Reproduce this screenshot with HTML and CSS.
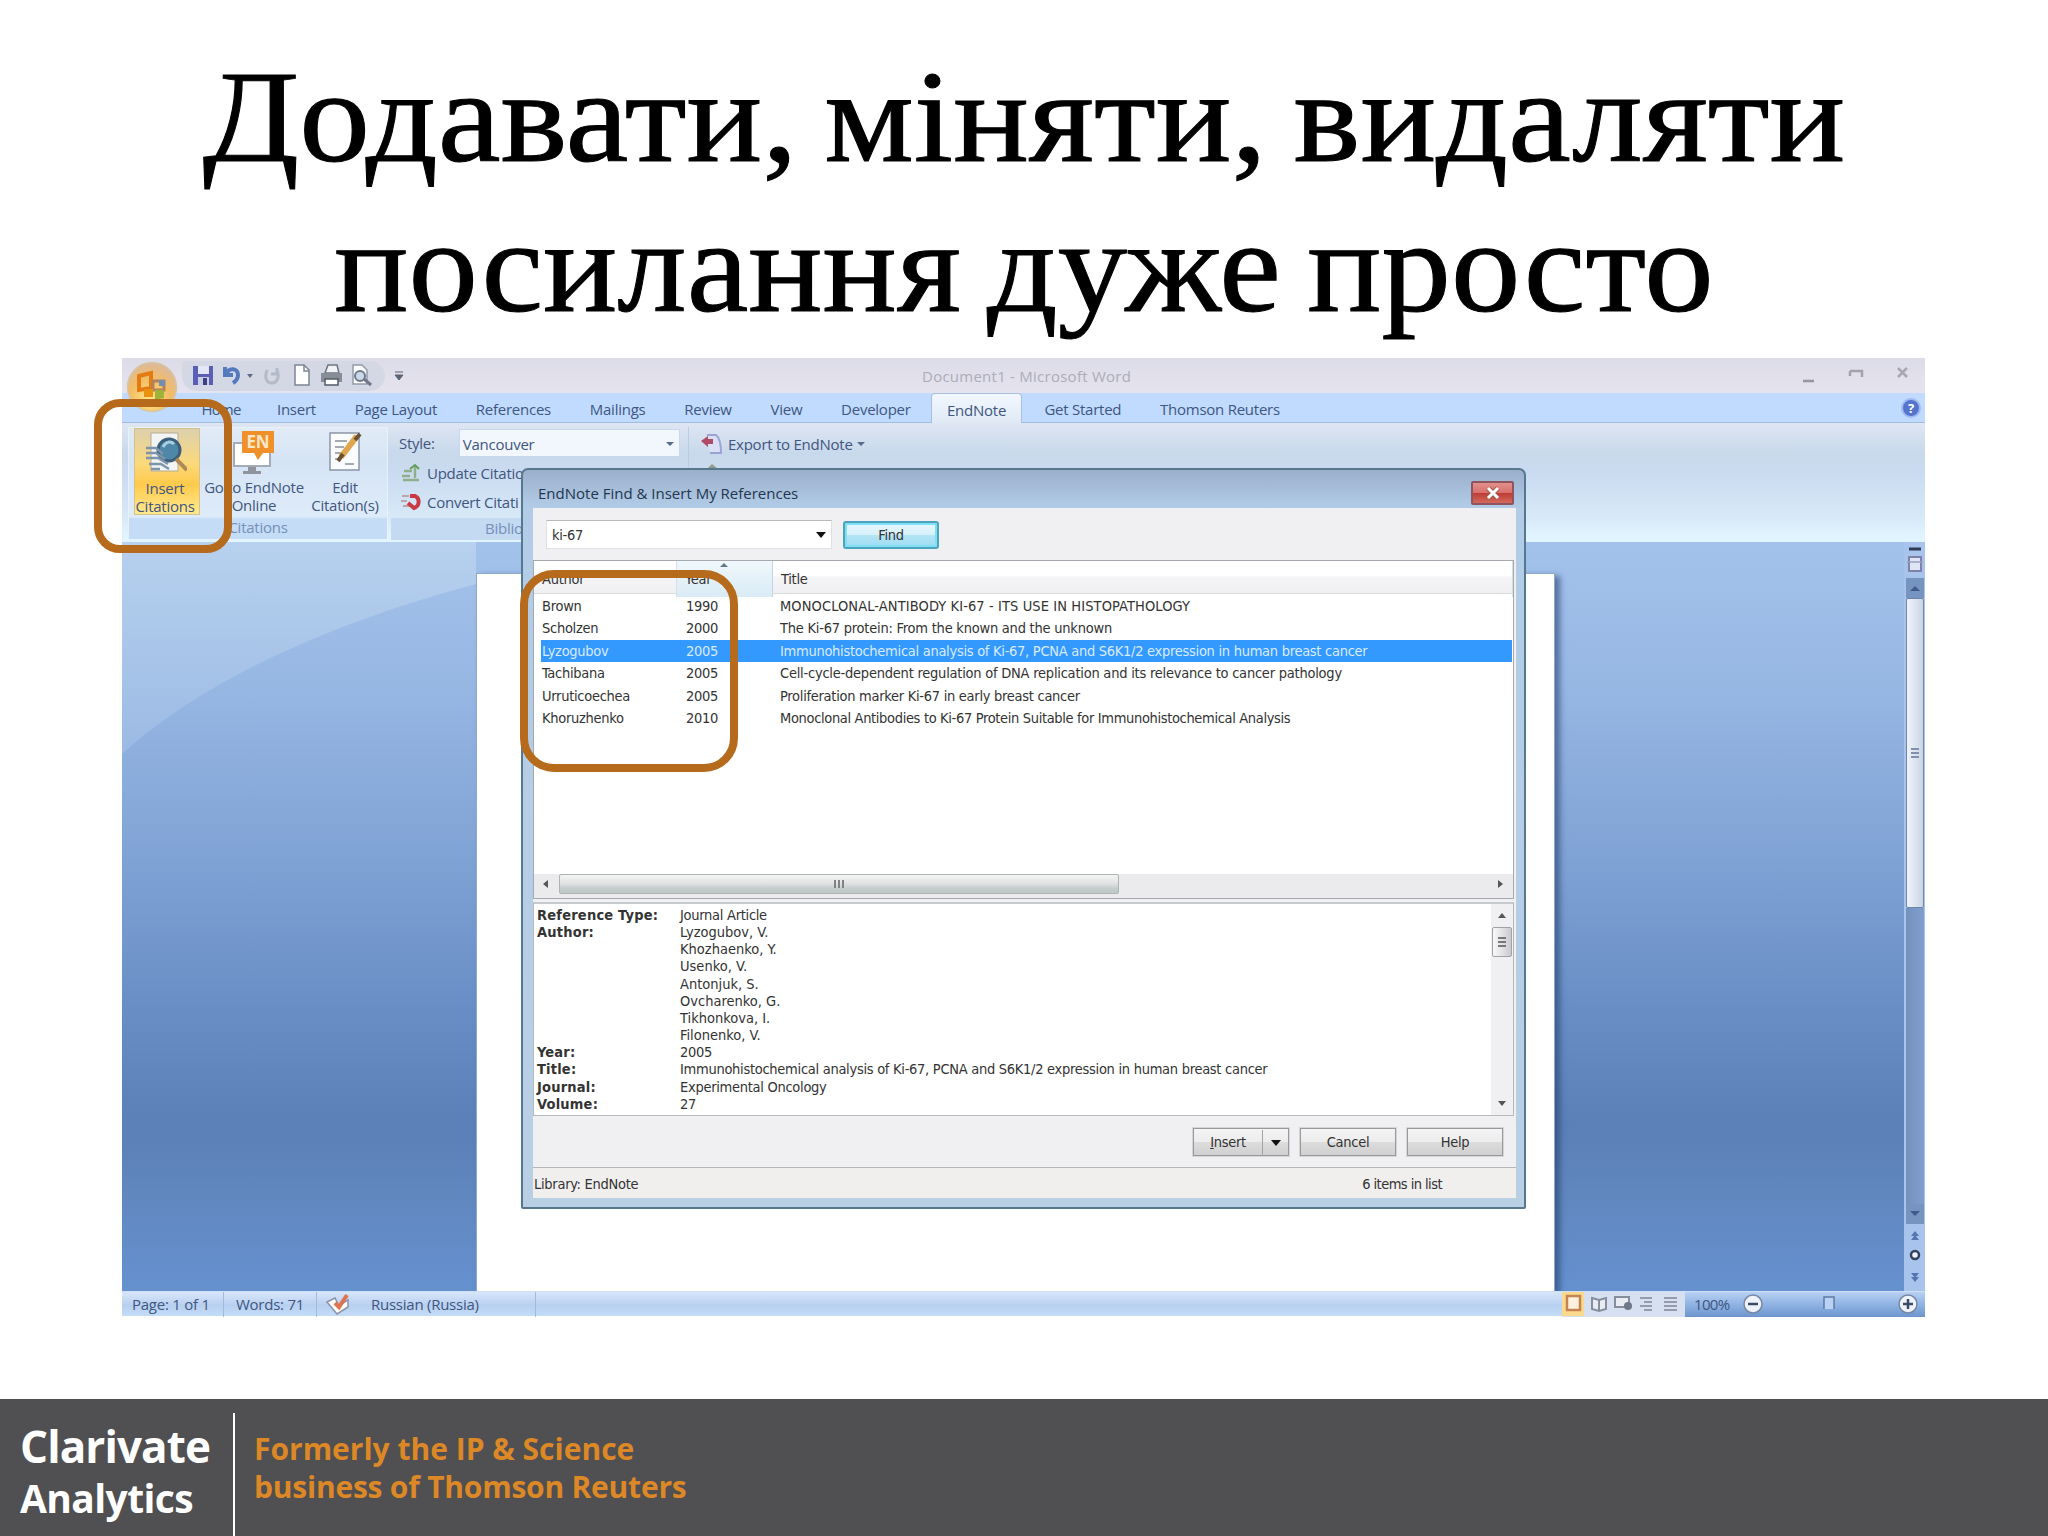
FILE: index.html
```
<!DOCTYPE html>
<html lang="uk">
<head>
    <meta charset="UTF-8">
    <meta name="viewport" content="width=device-width, initial-scale=1.0">
    <title>Додавати, міняти, видаляти посилання дуже просто</title>
    <link rel="stylesheet" href="styles.css">
</head>
<body>
    <div class="slide">
        <h1>
            <span class="line-one">Додавати, міняти, видаляти</span>
            <span class="line-two">посилання дуже просто</span>
        </h1>

        <div class="word">
            <div class="titlebar">
                <div class="quick-access">
                    <svg class="qa-icons" width="190" height="28" viewBox="0 0 190 28">
                        <path d="M8 5h20v19H8z" fill="#5a5fb5"/><path d="M13 5h11v8H13z" fill="#e3e6f7"/><path d="M13 16h11v8H13z" fill="#c9cde6"/><path d="M18 17h4v7h-4z" fill="#3a3f86"/>
                        <path d="M40 6v8h8M41 13c3-7 12-6 12 1 0 4-2 6-5 8" fill="none" stroke="#5579bd" stroke-width="4"/>
                        <path d="M62 13h6l-3 4z" fill="#5c6b8a"/>
                        <path d="M82 9c-3 9 0 13 5 13s8-6 5-13M92 7v6h-6" fill="none" stroke="#b3bac8" stroke-width="3"/>
                        <path d="M110 4h9l5 5v15h-14z" fill="#fff" stroke="#7d8594" stroke-width="1.5"/><path d="M119 4v6h5" fill="none" stroke="#7d8594" stroke-width="1.5"/>
                        <path d="M140 12l3-8h9l2 8z" fill="#f2f3f6" stroke="#6e7480" stroke-width="1.5"/><path d="M136 12h21v9h-21z" fill="#868c98"/><path d="M140 18h13v6h-13z" fill="#fff" stroke="#565b66" stroke-width="1.5"/>
                        <path d="M168 4h9l5 5v14h-14z" fill="#fff" stroke="#959baa" stroke-width="1.5"/><circle cx="175" cy="15" r="5" fill="#c9d8ea" stroke="#70798a" stroke-width="2"/><path d="M179 18l7 6" stroke="#70798a" stroke-width="3"/>
                    </svg>
                </div>
                <svg class="qa-more" width="10" height="12" viewBox="0 0 10 12"><path d="M1 2h8M1 5h8l-4 5z" fill="#5c6475" stroke="#5c6475"/></svg>
                <div class="doc-title">Document1 - Microsoft Word</div>
                <svg class="window-controls" width="112" height="20" viewBox="0 0 112 20">
                    <path d="M3 15h11" stroke="#96969f" stroke-width="2.5"/>
                    <path d="M50 5h12v6M50 10v-5" fill="none" stroke="#a2a2ac" stroke-width="2.5"/>
                    <path d="M98 2l9 9M107 2l-9 9" stroke="#a8a8b2" stroke-width="2.5"/>
                </svg>
            </div>
            <div class="tabs">
                <div class="tab home">Home</div>
                <div class="tab">Insert</div>
                <div class="tab">Page Layout</div>
                <div class="tab">References</div>
                <div class="tab">Mailings</div>
                <div class="tab">Review</div>
                <div class="tab">View</div>
                <div class="tab">Developer</div>
                <div class="tab active">EndNote</div>
                <div class="tab">Get Started</div>
                <div class="tab">Thomson Reuters</div>
                <div class="help">?</div>
            </div>
            <svg class="office-button" width="52" height="52" viewBox="0 0 52 52">
                <defs>
                    <radialGradient id="orb" cx="45%" cy="75%" r="75%">
                        <stop offset="0" stop-color="#ffe486"/><stop offset="0.55" stop-color="#f3bd65"/><stop offset="1" stop-color="#dcb99c"/>
                    </radialGradient>
                </defs>
                <circle cx="26" cy="26" r="24.500" fill="url(#orb)" stroke="#d5c7a6" stroke-width="1.500"/>
                <path d="M13 15l12-3v15l-12 2z" fill="none" stroke="#e37b12" stroke-width="4"/>
                <path d="M27 20h11v9H27z" fill="none" stroke="#b3805c" stroke-width="3"/>
                <path d="M18 28h9v8h-9z" fill="#e9920f"/><path d="M29 29h9v8l-9 2z" fill="#9fb23a"/><path d="M33 19h6v6h-6z" fill="#718fb2"/>
            </svg>

            <div class="ribbon">
                <div class="group citations">
                    <div class="group-body">
                        <div class="big-button selected">
                            <svg width="44" height="46" viewBox="0 0 44 46">
                                <path d="M8 2h27v38H8z" fill="#f3f4f4" stroke="#b5ab92"/>
                                <circle cx="26" cy="19" r="11" fill="#4f87a8" stroke="#3c5f7b" stroke-width="3"/><path d="M20 16c3-6 8-6 11-3" fill="none" stroke="#a8cfdf" stroke-width="3"/>
                                <path d="M33 28l11 11" stroke="#b08a55" stroke-width="4"/>
                                <path d="M3 17h10l7 6M3 22h10l9 6M3 27h12l10 6M6 33h12l8 5M8 38h9" fill="none" stroke="#7d95ab" stroke-width="2.500"/>
                            </svg>
                            <span>Insert<br>Citations</span>
                        </div>
                        <div class="big-button online">
                            <svg width="44" height="46" viewBox="0 0 44 46">
                                <path d="M2 13h36v23H2z" fill="#fff" stroke="#a3abba" stroke-width="2"/><path d="M16 37h8v4h5v3H11v-3h5z" fill="#8f939b"/>
                                <path d="M10 1h32v22H31l-5 7-4-7H10z" fill="#f0902a"/>
                                <text x="26" y="18" text-anchor="middle" class="en-mark">EN</text>
                            </svg>
                            <span>Go to EndNote<br>Online</span>
                        </div>
                        <div class="big-button edit">
                            <svg width="44" height="46" viewBox="0 0 44 46">
                                <path d="M7 3h29v37H7z" fill="#fbfcfd" stroke="#8b95a7" stroke-width="1.500"/>
                                <path d="M12 11h12M12 17h9M12 23h8M12 29h6M22 34h9" stroke="#a4a9b2" stroke-width="2"/>
                                <path d="M34 6L18 27" stroke="#e0a64e" stroke-width="6"/><path d="M37 4l-5 6M20 24l-5 7" stroke="#6b5136" stroke-width="4"/>
                            </svg>
                            <span>Edit<br>Citation(s)</span>
                        </div>
                    </div>
                    <div class="group-label">Citations</div>
                </div>
                <div class="group biblio">
                    <div class="row style-row"><span class="style-label">Style:</span><div class="select">Vancouver<i class="caret"></i></div></div>
                    <div class="row">
                        <svg width="22" height="20" viewBox="0 0 22 20"><path d="M5 8h8M3 13h8M4 17h16M16 2v13" stroke="#8faf8a" stroke-width="2.500"/><path d="M11 6l5-4 4 4" fill="none" stroke="#62a05a" stroke-width="2"/></svg>
                        Update Citations and Bibliography
                    </div>
                    <div class="row">
                        <svg width="22" height="20" viewBox="0 0 22 20"><path d="M3 4h7M2 9h6M4 14h6" stroke="#b9a7a7" stroke-width="2"/><path d="M11 4h5c5 2 5 10-1 12l-6-5" fill="none" stroke="#c93a45" stroke-width="4"/></svg>
                        Convert Citati
                    </div>
                    <div class="group-label">Biblio</div>
                </div>
                <div class="group tools">
                    <div class="row">
                        <svg width="22" height="22" viewBox="0 0 22 22"><path d="M7 2h9c4 3 5 9 5 18H10" fill="#d9e0f6" stroke="#9aa3d2" stroke-width="2"/><path d="M1 8l7-5v3h5v5H8v3z" fill="#b04a66"/></svg>
                        Export to EndNote<i class="caret"></i>
                    </div>
                    <div class="row prefs">
                        <svg width="22" height="20" viewBox="0 0 22 20"><path d="M3 10l9-9 6 5-8 9z" fill="#8f9a8a"/></svg>
                        Preferences
                    </div>
                </div>
            </div>

            <div class="workspace">
                <svg class="swoosh" width="354" height="230" viewBox="0 0 354 230" preserveAspectRatio="none">
                    <defs>
                        <linearGradient id="sheen" x1="0" y1="0" x2="0" y2="1">
                            <stop offset="0" stop-color="#b7d1ee"/><stop offset="1" stop-color="#9bbae4"/>
                        </linearGradient>
                    </defs>
                    <path d="M0 0H354V42C230 75 90 130 0 212Z" fill="url(#sheen)"/>
                </svg>
                <div class="paper"></div>
                <div class="scroll-column">
                    <svg width="18" height="36" viewBox="0 0 18 36"><path d="M3 7h12" stroke="#2f3a55" stroke-width="3"/><rect x="3" y="15" width="12" height="14" fill="#dfe5f5" stroke="#7d83a8" stroke-width="2"/><path d="M1 20h16" stroke="#9aa0c0" stroke-width="1.500"/></svg>
                    <div class="track-button"><svg width="10" height="6" viewBox="0 0 10 6"><path d="M0 6l5-5 5 5z" fill="#3f5b8a"/></svg></div>
                    <div class="thumb"><i></i><i></i><i></i></div>
                    <div class="track"></div>
                    <div class="track-button"><svg width="10" height="6" viewBox="0 0 10 6"><path d="M0 0l5 5 5-5z" fill="#3f5b8a"/></svg></div>
                    <svg width="18" height="67" viewBox="0 0 18 67"><path d="M9 7l4 5H5zM9 11l4 5H5z" fill="#5575b3"/><circle cx="9" cy="31" r="4" fill="#eef3fb" stroke="#33415e" stroke-width="2.500"/><path d="M9 58l4-5H5zM9 54l4-5H5z" fill="#5575b3"/></svg>
                </div>
            </div>

            <div class="word-status">
                <span class="page-count">Page: 1 of 1</span>
                <span class="word-count">Words: 71</span>
                <svg class="proof" width="24" height="22" viewBox="0 0 24 22"><path d="M1 9l8-4 4 8 9-6v7l-11 7z" fill="#fff" stroke="#8d92a8" stroke-width="1.500"/><path d="M9 10l4 4 8-12" fill="none" stroke="#e0734d" stroke-width="4"/></svg>
                <span class="language">Russian (Russia)</span>
                <div class="status-right">
                    <div class="views">
                        <svg width="122" height="24" viewBox="0 0 122 24">
                            <path d="M0 0h22v24H0z" fill="#fbd98c"/><path d="M5 4h13v14H5z" fill="#fff1dc" stroke="#c48352" stroke-width="2.500"/>
                            <path d="M30 6l7 2 7-2v11l-7 2-7-2zM37 8v11" fill="#e9ecf2" stroke="#868e9e" stroke-width="2"/>
                            <path d="M53 5h14v10H53z" fill="#e9ecf2" stroke="#868e9e" stroke-width="2"/><circle cx="66" cy="14" r="4" fill="#6f7889"/>
                            <path d="M78 6h12M82 10h8M78 14h12M82 18h8" stroke="#949cab" stroke-width="2"/>
                            <path d="M102 6h13M102 10h13M102 14h13M102 18h13" stroke="#949cab" stroke-width="2"/>
                        </svg>
                    </div>
                    <span class="zoom-level">100%</span>
                    <svg width="178" height="24" viewBox="0 0 178 24">
                        <circle cx="11" cy="12" r="9" fill="#eef2f9" stroke="#7887a6" stroke-width="1.500"/><path d="M6 12h10" stroke="#3d4a66" stroke-width="2.500"/>
                        <path d="M82 17V5h10v12" fill="#b9d1f2" stroke="#5d7aa8" stroke-width="1.500"/>
                        <circle cx="166" cy="12" r="9" fill="#eef2f9" stroke="#7887a6" stroke-width="1.500"/><path d="M161 12h10M166 7v10" stroke="#3d4a66" stroke-width="2.500"/>
                    </svg>
                </div>
            </div>

            <div class="dialog">
                <div class="dialog-title">
                    <span>EndNote Find &amp; Insert My References</span>
                    <div class="close"><svg width="18" height="14" viewBox="0 0 18 14"><path d="M4 2l10 10M14 2L4 12" stroke="#a05a50" stroke-width="5"/><path d="M4 2l10 10M14 2L4 12" stroke="#fff" stroke-width="3"/></svg></div>
                </div>
                <div class="client">
                    <div class="search">
                        <div class="combo">ki-67<i class="arrow-down"></i></div>
                        <button class="find">Find</button>
                    </div>
                    <div class="list">
                        <div class="list-head">
                            <div>Author</div>
                            <div class="sorted">Year</div>
                            <div>Title</div>
                        </div>
                        <div class="list-rows">
                            <div class="item"><span>Brown</span><span>1990</span><span class="caps">MONOCLONAL-ANTIBODY KI-67 - ITS USE IN HISTOPATHOLOGY</span></div>
                            <div class="item"><span>Scholzen</span><span>2000</span><span class="wide">The Ki-67 protein: From the known and the unknown</span></div>
                            <div class="item chosen"><span>Lyzogubov</span><span>2005</span><span>Immunohistochemical analysis of Ki-67, PCNA and S6K1/2 expression in human breast cancer</span></div>
                            <div class="item"><span>Tachibana</span><span>2005</span><span class="wide">Cell-cycle-dependent regulation of DNA replication and its relevance to cancer pathology</span></div>
                            <div class="item"><span>Urruticoechea</span><span>2005</span><span>Proliferation marker Ki-67 in early breast cancer</span></div>
                            <div class="item"><span>Khoruzhenko</span><span>2010</span><span class="narrow">Monoclonal Antibodies to Ki-67 Protein Suitable for Immunohistochemical Analysis</span></div>
                        </div>
                        <div class="h-scroll">
                            <i class="arrow-left"></i>
                            <div class="h-thumb"><i></i><i></i><i></i></div>
                            <i class="arrow-right"></i>
                        </div>
                    </div>
                    <div class="details">
                        <dl>
                            <dt>Reference Type:</dt><dd>Journal Article</dd>
                            <dt>Author:</dt><dd class="names">Lyzogubov, V.<br>Khozhaenko, Y.<br>Usenko, V.<br>Antonjuk, S.<br>Ovcharenko, G.<br>Tikhonkova, I.<br>Filonenko, V.</dd>
                            <dt>Year:</dt><dd>2005</dd>
                            <dt>Title:</dt><dd>Immunohistochemical analysis of Ki-67, PCNA and S6K1/2 expression in human breast cancer</dd>
                            <dt>Journal:</dt><dd>Experimental Oncology</dd>
                            <dt>Volume:</dt><dd>27</dd>
                        </dl>
                        <div class="v-scroll">
                            <i class="arrow-up"></i>
                            <div class="v-thumb"><i></i><i></i><i></i></div>
                            <i class="arrow-down small"></i>
                        </div>
                    </div>
                    <div class="buttons">
                        <button class="split"><span><u>I</u>nsert</span><b><i class="arrow-down"></i></b></button>
                        <button>Cancel</button>
                        <button>Help</button>
                    </div>
                    <div class="dialog-status"><span>Library: EndNote</span><span class="count">6 items in list</span></div>
                </div>
            </div>

            <div class="marker marker-insert"></div>
            <div class="marker marker-list"></div>
        </div>

        <div class="footer">
            <div class="brand"><span>Clarivate</span><span class="sub">Analytics</span></div>
            <div class="former">Formerly the IP &amp; Science<br><span>business of Thomson Reuters</span></div>
        </div>
    </div>
</body>
</html>
```
FILE: styles.css
```
* {
    box-sizing: border-box;
}
body {
    margin: 0;
    background: #fff;
}
.slide {
    width: 2048px;
    height: 1536px;
    display: flex;
    flex-direction: column;
    overflow: hidden;
}
h1 {
    height: 358px;
    margin: 0;
    padding-top: 42px;
    font: 131px/150px "Liberation Serif", serif;
    text-align: center;
    word-spacing: -8px;
    color: #000;
    -webkit-text-stroke: 1px #000;
}
h1 span {
    display: block;
    white-space: nowrap;
}
/* stretched a little to get the wide old-style look */
.line-one {
    transform: scaleX(1.08);
}
.line-two {
    transform: scaleX(1.06);
}

/* Word window */
.word {
    position: relative;
    width: 1803px;
    height: 958px;
    margin-left: 122px;
    display: flex;
    flex-direction: column;
    font: 15px/18px "Open Sans", sans-serif;
    letter-spacing: -0.25px;
    color: #3f5680;
    white-space: nowrap;
}
.titlebar {
    height: 35px;
    display: flex;
    align-items: center;
    padding-left: 60px;
    background: linear-gradient(#dcdce8, #e5e3ee);
}
.quick-access {
    width: 203px;
    height: 30px;
    padding-left: 3px;
    border-radius: 4px 15px 15px 15px;
    background: #d3d8e4;
}
.qa-more {
    margin-left: 9px;
}
.doc-title {
    margin-left: 518px;
    width: 230px;
    letter-spacing: 0.25px;
    color: #adadb8;
}
.window-controls {
    margin-left: 648px;
}
.tabs {
    height: 30px;
    display: flex;
    align-items: flex-end;
    padding-left: 60px;
    background: #c0dbff;
    border-bottom: 1px solid #a0bcdf;
}
.tab {
    height: 29px;
    padding: 0 19.400px;
    line-height: 33px;
}
.tab.home {
    padding-right: 17px;
    letter-spacing: -0.8px;
}
.tab.active {
    height: 30px;
    margin: 0 3px -1px 1px;
    padding: 0 15px;
    background: linear-gradient(#f3f8ff, #dfe9f5);
    border: 1px solid #a9bfdd;
    border-bottom: 0;
    border-radius: 4px 4px 0 0;
}
.help {
    align-self: center;
    width: 20px;
    height: 20px;
    margin: 0 4px 0 auto;
    border-radius: 50%;
    background: #5574cc;
    border: 2px solid #9fb9f3;
    color: #fff;
    font-size: 13px;
    font-weight: bold;
    line-height: 16px;
    text-align: center;
}
.office-button {
    position: absolute;
    left: 4px;
    top: 3px;
}
.ribbon {
    height: 119px;
    display: flex;
    align-items: flex-start;
    gap: 3px;
    padding: 4px 5px 0 6px;
    background: linear-gradient(#dfe6f3, #c8d9eb 25%, #cadbf1 42%, #d7e8f7 78%, #e0f5ff 96%);
}
.group {
    height: 113px;
    display: flex;
    flex-direction: column;
}
.citations {
    width: 260px;
    border: 1px solid #e7f2fc;
    background: linear-gradient(#e1ebf6, #d5e4f5 30%, #deebf9 80%, #c4dcf5 82%);
}
.group-body {
    flex: 1;
    display: flex;
    padding-left: 5px;
}
.big-button {
    width: 66px;
    height: 87px;
    display: flex;
    flex-direction: column;
    align-items: center;
    text-align: center;
    line-height: 17.500px;
    padding-top: 2px;
}
.big-button svg {
    flex: none;
    margin-bottom: 3px;
}
.selected {
    padding-right: 4px;
    background: linear-gradient(#dcd0ae, #fbd97c 40%, #ffca4b 65%, #ffe98f);
    border: 1px solid #d5c28a;
}
.online {
    width: 108px;
}
.edit {
    width: 74px;
}
.en-mark {
    font: bold 17px "Open Sans", sans-serif;
    fill: #ffe6c4;
}
.group-label {
    height: 24px;
    margin-top: auto;
    line-height: 24px;
    text-align: center;
    color: #7590ba;
}
.biblio {
    width: 298px;
    padding-left: 8px;
    border-right: 1px solid #b9cce4;
    background: linear-gradient(transparent 80%, #c4daf2 81%);
}
.biblio .group-label {
    padding-left: 86px;
    text-align: left;
}
.row {
    flex: none;
    height: 29px;
    display: flex;
    align-items: center;
    gap: 6px;
}
.row svg {
    flex: none;
}
.style-row {
    height: 31px;
    gap: 24px;
}
.select {
    width: 221px;
    height: 28px;
    display: flex;
    align-items: center;
    justify-content: space-between;
    padding: 2px 5px 0 3px;
    background: #f2f7fe;
    border: 1px solid #c7d8ee;
}
.caret {
    border: 4px solid transparent;
    border-top-color: #566a8c;
    border-bottom: 0;
}
.tools {
    padding: 2px 0 0 8px;
}
.tools .caret {
    margin-left: -2px;
}

.workspace {
    position: relative;
    height: 749px;
    display: flex;
    background: linear-gradient(#a3c2eb, #98b8e4 18%, #80a3d5 42%, #698ec6 62%, #5b7fb7 78%, #6187bf 87%, #6591cf);
    overflow: hidden;
}
.swoosh {
    position: absolute;
    left: 0;
    top: 0;
}
.paper {
    width: 1079px;
    margin: 31px 0 0 354px;
    background: #fff;
    border: 1px solid #8ea8c9;
    border-bottom: 0;
    box-shadow: 5px 3px 6px rgba(35, 60, 105, 0.6);
}
.scroll-column {
    width: 21px;
    margin-left: auto;
    display: flex;
    flex-direction: column;
    align-items: center;
    background: #a9c4ec;
}
.track-button {
    width: 18px;
    height: 20px;
    display: flex;
    align-items: center;
    justify-content: center;
    background: #7595c0;
}
.thumb {
    width: 18px;
    height: 310px;
    display: flex;
    flex-direction: column;
    align-items: center;
    justify-content: center;
    gap: 2px;
    background: linear-gradient(90deg, #f0f4fb, #ccd5e4);
    border: 1px solid #6c86ab;
    border-radius: 2px;
}
.thumb i {
    width: 8px;
    height: 2px;
    background: #8190ab;
}
.track {
    width: 18px;
    flex: 1;
    background: linear-gradient(90deg, #7391bd, #7f9fcd);
}

.word-status {
    height: 25px;
    display: flex;
    align-items: center;
    padding-left: 10px;
    background: linear-gradient(#d8e6fb, #b8d0f0 55%, #c3dcf8);
    border-top: 1px solid #cfe0f6;
}
.word-status span {
    height: 25px;
    line-height: 25px;
}
.page-count {
    width: 92px;
    border-right: 1px solid #a1b9dc;
}
.word-count {
    width: 93px;
    padding-left: 12px;
    border-right: 1px solid #a1b9dc;
}
.proof {
    margin-left: 9px;
}
.language {
    width: 165px;
    margin-left: 21px;
    border-right: 1px solid #a1b9dc;
}
.status-right {
    display: flex;
    width: 363px;
    margin-left: auto;
    background: linear-gradient(#b8d1f3, #8fb3e3 50%, #6d95cd);
}
.views {
    width: 123px;
    height: 25px;
    background: #d6e0f0;
}
.word-status .zoom-level {
    width: 57px;
    padding-left: 9px;
    letter-spacing: -0.7px;
}

/* EndNote dialog */
.dialog {
    position: absolute;
    left: 399px;
    top: 110px;
    width: 1005px;
    height: 741px;
    display: flex;
    flex-direction: column;
    padding: 0 8px 9px 10px;
    border: 2px solid #56788f;
    border-radius: 7px 7px 2px 2px;
    background: linear-gradient(#9bafcb, #b2cce7 38px, #b9cfe4);
    font: 14.500px/17px "DejaVu Sans Condensed", "DejaVu Sans", sans-serif;
    letter-spacing: -0.28px;
    color: #333;
}
.dialog-title {
    height: 38px;
    display: flex;
    justify-content: space-between;
    align-items: center;
    padding: 10px 1px 0 5px;
    font-family: "Open Sans", sans-serif;
    font-size: 15px;
    letter-spacing: 0;
    color: #22364f;
}
.dialog-title span {
    margin-bottom: 2px;
}
.close {
    width: 43px;
    height: 24px;
    margin: 0 1px 2px 0;
    display: flex;
    align-items: center;
    justify-content: center;
    background: linear-gradient(#e2908c, #d9706b 48%, #bd3b33 50%, #d36a5c);
    border: 2px solid #8e5560;
    border-radius: 2px;
}
.client {
    flex: 1;
    display: flex;
    flex-direction: column;
    background: #f0eff1;
}
.search {
    height: 52px;
    display: flex;
    align-items: center;
    gap: 11px;
    padding: 1px 0 0 13px;
}
.combo {
    width: 286px;
    height: 29px;
    display: flex;
    align-items: center;
    justify-content: space-between;
    padding: 1px 5px 0;
    background: #fff;
    border: 1px solid #e0e0e3;
    border-top-color: #b9b9bd;
}
.arrow-down {
    border: 5px solid transparent;
    border-top: 6px solid #111;
    border-bottom: 0;
}
button {
    width: 96px;
    height: 28px;
    padding: 1px 0 0;
    border: 1px solid #9a9a9e;
    outline: 1px solid #d5d5d8;
    background: linear-gradient(#f4f4f4, #ececec 50%, #dcdcdc 52%, #d0d0d0);
    font: inherit;
    letter-spacing: inherit;
    color: #333;
}
.find {
    border: 2px solid #4ba3bd;
    border-radius: 3px;
    outline: 0;
    background: linear-gradient(#e8f7fc, #d5f0fa 50%, #b2e4f5 52%, #a0dcf2);
    box-shadow: inset 0 0 0 2px #7fe0f5;
}
.list {
    height: 339px;
    width: 981px;
    display: flex;
    flex-direction: column;
    background: #fff;
    border: 1px solid #a5a8ae;
}
.list-head {
    height: 33px;
    display: grid;
    grid-template-columns: 143px 96px 1fr;
    line-height: 36px;
    background: linear-gradient(#fff 45%, #f5f4f6 50%, #f0eff2);
    border-bottom: 1px solid #d9d9dc;
}
.list-head div {
    padding-left: 8px;
    border-right: 1px solid #dadfe4;
}
.list-head .sorted {
    position: relative;
    background: linear-gradient(#f0f8fc, #e4f1f8 50%, #d9ebf5);
    border-right-color: #bcd6e4;
}
.sorted::after {
    content: "";
    position: absolute;
    left: 43px;
    top: 2px;
    border: 4px solid transparent;
    border-bottom-color: #62788a;
    border-top: 0;
}
.list-rows {
    flex: 1;
    padding: 1px 1px 0 7px;
}
.item {
    height: 22.400px;
    display: grid;
    grid-template-columns: 144px 94px 1fr;
    line-height: 23px;
}
.item span {
    padding-left: 1px;
}
.item .caps {
    letter-spacing: 0.1px;
}
.item .wide {
    letter-spacing: -0.23px;
}
.item .narrow {
    letter-spacing: -0.34px;
}
.chosen {
    background: #3399ff;
    color: #d8ebff;
}
.h-scroll {
    height: 24px;
    display: flex;
    align-items: center;
    padding: 0 10px 4px 9px;
    background: #ebebed;
}
.arrow-left, .arrow-right {
    border: 4px solid transparent;
    border-right: 5px solid #555;
    border-left: 0;
}
.arrow-right {
    margin-left: auto;
    border-left: 5px solid #555;
    border-right: 0;
}
.h-thumb {
    width: 560px;
    height: 20px;
    margin-left: 11px;
    display: flex;
    align-items: center;
    justify-content: center;
    gap: 2px;
    background: linear-gradient(#f3f3f3, #e2e4e4 45%, #c5cccc 75%, #bfc7c7);
    border: 1px solid #b0b3b5;
    border-radius: 2px;
}
.h-thumb i {
    width: 2px;
    height: 8px;
    background: #808386;
}
.details {
    height: 214px;
    width: 981px;
    margin-top: 3px;
    display: flex;
    justify-content: space-between;
    background: #fff;
    border: 1px solid #b5b8bc;
    border-top: 2px solid #c6cacd;
}
.details dl {
    display: grid;
    grid-template-columns: 143px 1fr;
    align-content: start;
    margin: 0;
    padding: 3px 0 0 3px;
    line-height: 17.150px;
}
.details dt {
    font-weight: bold;
    letter-spacing: 0.2px;
}
.details dd {
    margin: 0;
}
.details .names {
    letter-spacing: 0;
}
.v-scroll {
    width: 22px;
    display: flex;
    flex-direction: column;
    align-items: center;
    padding: 9px 1px 9px 0;
    background: #f0f0f2;
}
.arrow-up {
    border: 4px solid transparent;
    border-bottom: 5px solid #555;
    border-top: 0;
}
.arrow-down.small {
    margin-top: auto;
    border: 4px solid transparent;
    border-top: 5px solid #555;
    border-bottom: 0;
}
.v-thumb {
    width: 20px;
    height: 30px;
    margin-top: 9px;
    display: flex;
    flex-direction: column;
    align-items: center;
    justify-content: center;
    gap: 2px;
    background: linear-gradient(90deg, #f8f8f8, #e3e3e6 50%, #c9c9ce);
    border: 1px solid #a2a2a6;
    border-radius: 2px;
}
.v-thumb i {
    width: 8px;
    height: 2px;
    background: #77777c;
}
.buttons {
    height: 52px;
    display: flex;
    justify-content: flex-end;
    gap: 11px;
    padding: 12px 13px 0 0;
    border-bottom: 1px solid #b5b5b8;
}
.split {
    display: flex;
    align-items: center;
}
.split span {
    flex: 1;
}
.split b {
    height: 26px;
    width: 26px;
    display: flex;
    align-items: center;
    justify-content: center;
    border-left: 1px solid #a3a3a7;
}
.dialog-status {
    flex: 1;
    display: flex;
    justify-content: space-between;
    align-items: center;
    padding: 3px 74px 0 1px;
    background: #f1eeee;
}
.dialog-status .count {
    letter-spacing: -0.55px;
}

/* callouts drawn over the window */
.marker {
    position: absolute;
    border: 8px solid #b66b1c;
}
.marker-insert {
    left: -28px;
    top: 41px;
    width: 138px;
    height: 154px;
    border-radius: 26px;
}
.marker-list {
    left: 398px;
    top: 212px;
    width: 218px;
    height: 202px;
    border-radius: 34px;
}

.footer {
    height: 137px;
    margin-top: auto;
    display: flex;
    align-items: flex-end;
    background: #504f51;
    font-family: "Open Sans", sans-serif;
    font-weight: bold;
}
.brand {
    width: 235px;
    height: 123px;
    display: flex;
    flex-direction: column;
    padding: 7px 0 0 20px;
    border-right: 2px solid #fff;
    color: #fff;
    font-size: 44px;
    line-height: 53px;
    letter-spacing: -0.900px;
}
.brand .sub {
    font-size: 39px;
    line-height: 50px;
    letter-spacing: -0.6px;
}
.former {
    height: 123px;
    padding: 17px 0 0 19px;
    color: #dc8826;
    font-size: 30px;
    line-height: 37.500px;
}
.former span {
    letter-spacing: -0.22px;
}
```
